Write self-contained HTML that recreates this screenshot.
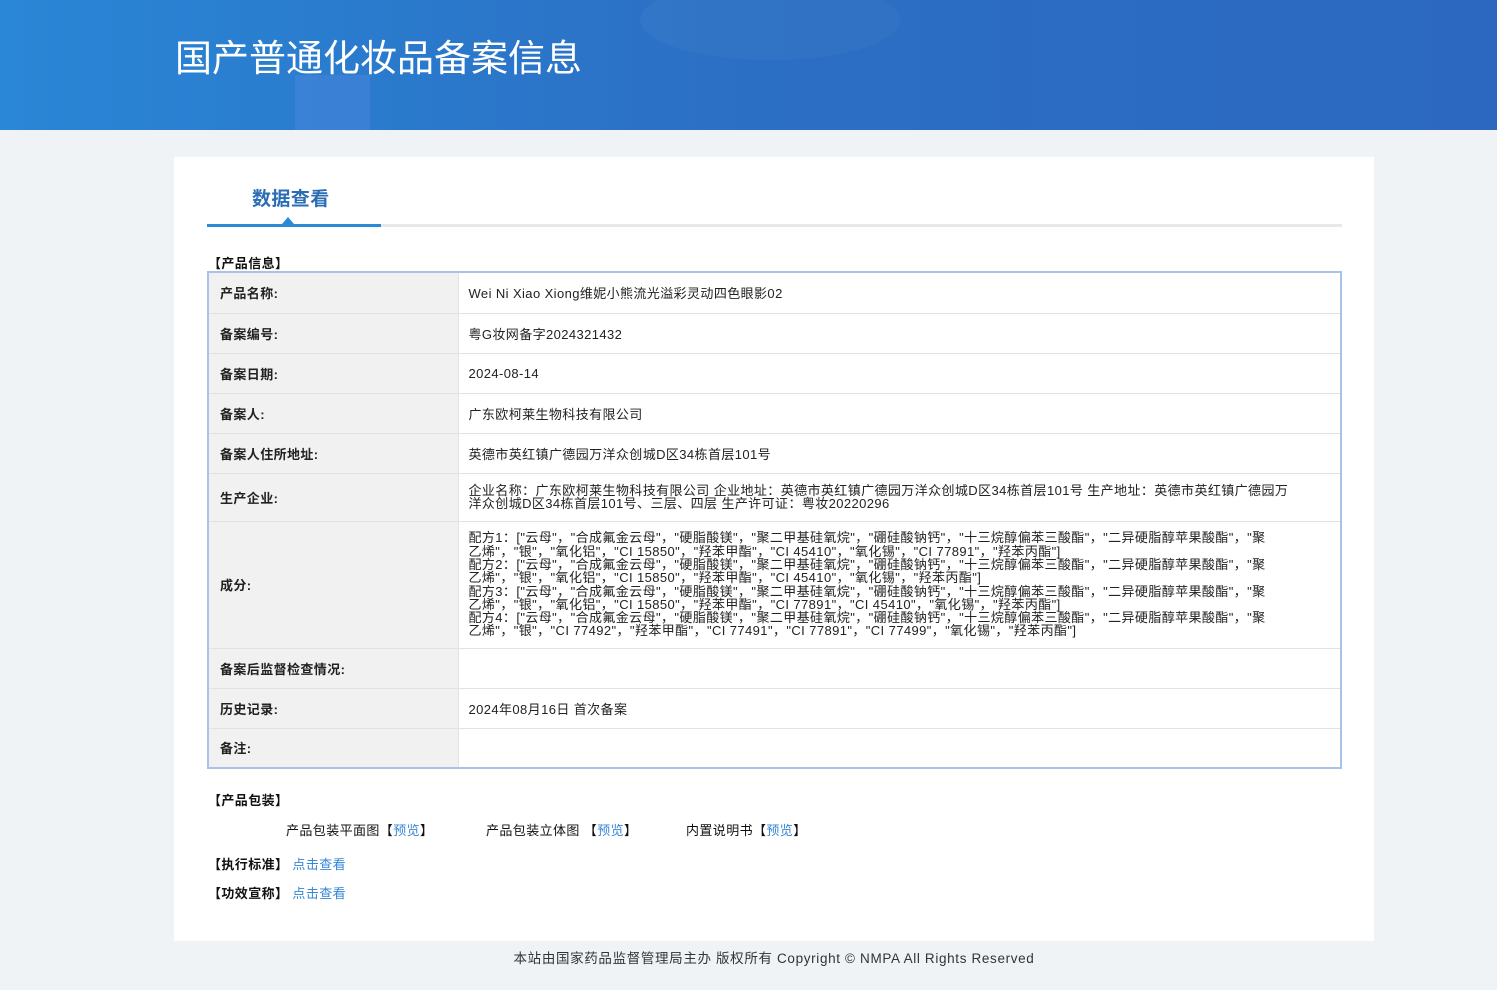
<!DOCTYPE html>
<html><head><meta charset="utf-8"><style>
*{margin:0;padding:0;box-sizing:border-box}
body{width:1497px;height:990px;background:#f0f3f6;font-family:"Liberation Sans","Noto Sans CJK SC",sans-serif;color:#333;position:relative;overflow:hidden;letter-spacing:0.4px}
.hd{position:absolute;left:0;top:0;width:1497px;height:130px;background:linear-gradient(90deg,#2a86d6 0%,#2b6fc4 50%,#2c68c0 100%);overflow:hidden}
.hd .s1{position:absolute;left:295px;top:75px;width:75px;height:60px;background:rgba(90,140,230,.35)}
.hd .s2{position:absolute;left:640px;top:-20px;width:260px;height:80px;border-radius:50%;background:rgba(255,255,255,.03)}
.hd h1{position:absolute;left:175px;top:28px;font-size:37px;font-weight:normal;color:#fff;letter-spacing:0}
.main{position:absolute;left:174px;top:157px;width:1200px;height:784px;background:#fff}
.tab{position:absolute;left:78px;top:27px;font-size:19px;font-weight:bold;color:#2a6db5}
.line{position:absolute;left:207px;top:224px;width:1135px;height:3px;background:#e8e8e8}
.line2{position:absolute;left:207px;top:224px;width:174px;height:3px;background:#2b8ad8}
.tri{position:absolute;left:282px;top:217px;width:0;height:0;border-left:6px solid transparent;border-right:6px solid transparent;border-bottom:7px solid #2b8ad8}
.sec{position:absolute;font-size:13px;font-weight:bold;color:#111}
table{position:absolute;left:207px;top:271px;width:1135px;border-collapse:collapse;border:2px solid #a6c3e8;font-size:13px}
td{border:1px solid #e2e2e2;padding:0 10px;vertical-align:middle;color:#222}
td.l{width:250px;background:#f1f1f1;font-weight:bold;padding-left:11px}
td.m{line-height:13.3px}
.a{position:absolute;font-size:13px;color:#111}
.b{color:#3586d6;font-weight:normal}
.ft{position:absolute;left:0;width:1548px;top:947px;text-align:center;font-size:13.5px;color:#333;letter-spacing:0.65px}
</style></head><body>
<div class="hd"><div class="s1"></div><div class="s2"></div><h1>国产普通化妆品备案信息</h1></div>
<div class="main"><div class="tab">数据查看</div></div>
<div class="line"></div>
<div class="line2"></div>
<div class="tri"></div>
<div class="sec" style="left:208px;top:253px">【产品信息】</div>
<table>
<tr style="height:41px"><td class="l">产品名称:</td><td>Wei Ni Xiao Xiong维妮小熊流光溢彩灵动四色眼影02</td></tr>
<tr style="height:40px"><td class="l">备案编号:</td><td>粤G妆网备字2024321432</td></tr>
<tr style="height:40px"><td class="l">备案日期:</td><td>2024-08-14</td></tr>
<tr style="height:40px"><td class="l">备案人:</td><td>广东欧柯莱生物科技有限公司</td></tr>
<tr style="height:40px"><td class="l">备案人住所地址:</td><td>英德市英红镇广德园万洋众创城D区34栋首层101号</td></tr>
<tr style="height:48px"><td class="l">生产企业:</td><td class="m">企业名称：广东欧柯莱生物科技有限公司 企业地址：英德市英红镇广德园万洋众创城D区34栋首层101号 生产地址：英德市英红镇广德园万<br>洋众创城D区34栋首层101号、三层、四层 生产许可证：粤妆20220296</td></tr>
<tr style="height:127px"><td class="l">成分:</td><td class="m">配方1：["云母"，"合成氟金云母"，"硬脂酸镁"，"聚二甲基硅氧烷"，"硼硅酸钠钙"，"十三烷醇偏苯三酸酯"，"二异硬脂醇苹果酸酯"，"聚<br>乙烯"，"银"，"氧化铝"，"CI 15850"，"羟苯甲酯"，"CI 45410"，"氧化锡"，"CI 77891"，"羟苯丙酯"]<br>配方2：["云母"，"合成氟金云母"，"硬脂酸镁"，"聚二甲基硅氧烷"，"硼硅酸钠钙"，"十三烷醇偏苯三酸酯"，"二异硬脂醇苹果酸酯"，"聚<br>乙烯"，"银"，"氧化铝"，"CI 15850"，"羟苯甲酯"，"CI 45410"，"氧化锡"，"羟苯丙酯"]<br>配方3：["云母"，"合成氟金云母"，"硬脂酸镁"，"聚二甲基硅氧烷"，"硼硅酸钠钙"，"十三烷醇偏苯三酸酯"，"二异硬脂醇苹果酸酯"，"聚<br>乙烯"，"银"，"氧化铝"，"CI 15850"，"羟苯甲酯"，"CI 77891"，"CI 45410"，"氧化锡"，"羟苯丙酯"]<br>配方4：["云母"，"合成氟金云母"，"硬脂酸镁"，"聚二甲基硅氧烷"，"硼硅酸钠钙"，"十三烷醇偏苯三酸酯"，"二异硬脂醇苹果酸酯"，"聚<br>乙烯"，"银"，"CI 77492"，"羟苯甲酯"，"CI 77491"，"CI 77891"，"CI 77499"，"氧化锡"，"羟苯丙酯"]</td></tr>
<tr style="height:40px"><td class="l">备案后监督检查情况:</td><td></td></tr>
<tr style="height:40px"><td class="l">历史记录:</td><td>2024年08月16日 首次备案</td></tr>
<tr style="height:40px"><td class="l">备注:</td><td></td></tr>
</table>
<div class="sec" style="left:208px;top:790px">【产品包装】</div>
<div class="a" style="left:286px;top:820px">产品包装平面图【<span class="b">预览</span>】</div>
<div class="a" style="left:486px;top:820px">产品包装立体图 【<span class="b">预览</span>】</div>
<div class="a" style="left:686px;top:820px">内置说明书【<span class="b">预览</span>】</div>
<div class="sec" style="left:208px;top:854px">【执行标准】 <span class="b">点击查看</span></div>
<div class="sec" style="left:208px;top:883px">【功效宣称】 <span class="b">点击查看</span></div>
<div class="ft">本站由国家药品监督管理局主办 版权所有 Copyright © NMPA All Rights Reserved</div>
</body></html>
